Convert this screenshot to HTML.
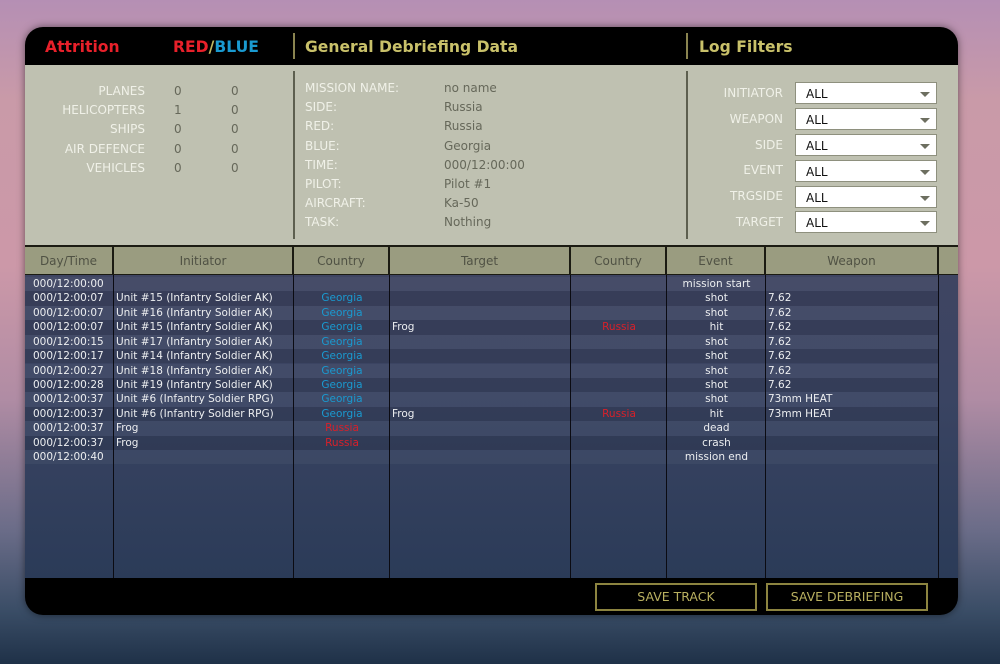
<!DOCTYPE html>
<html><head><meta charset="utf-8"><style>
*{margin:0;padding:0;box-sizing:border-box}
body{width:1000px;height:664px;overflow:hidden;position:relative;font-family:"DejaVu Sans","Liberation Sans",sans-serif;
background:linear-gradient(180deg,#b58fb4 0%,#c99aa8 15%,#cc98a8 40%,#b08ca4 60%,#6a6c88 80%,#3a4d66 92%,#1f3148 100%);}
.a{position:absolute;white-space:nowrap}
#panel{position:absolute;left:25px;top:27px;width:933px;height:588px;border-radius:18px;overflow:hidden;background:#000;box-shadow:0 0 8px rgba(0,0,0,.5)}
.h{font-weight:bold;font-size:15.6px;top:11px}
.gray{position:absolute;left:0;top:38px;width:933px;height:181px;background:#bfc1b1}
.lbl{color:#f0f1e8;font-size:12px}
.val{color:#66685a;font-size:12px}
.vl{position:absolute;width:2px;background:#5d5f4f}
.th{position:absolute;top:220px;height:28px;background:#9a9c80;border-right:2px solid #1b1b12;color:#505244;font-size:12px;text-align:center;line-height:28px}
.body{position:absolute;left:0;top:248px;width:933px;height:303px;background:linear-gradient(180deg,#3f4562 0%,#3a4462 40%,#2b3b58 100%)}
.col{position:absolute;top:248px;height:303px;width:1px;background:#0b0b12}
.row{position:absolute;left:0;width:913px;height:14.4px}
.c{position:absolute;font-size:10.5px;color:#eceef0;line-height:14px}
.sel{position:absolute;left:770px;width:142px;height:22px;background:#fff;border:1px solid #8e907e;font-size:12px;color:#111;padding-left:10px;line-height:23px}
.sel:after{content:"";position:absolute;right:6px;top:9px;border-left:5px solid transparent;border-right:5px solid transparent;border-top:5px solid #6d6f60}
.btn{position:absolute;top:556px;height:28px;border:2px solid #8c8440;color:#b9b060;font-size:12.5px;text-align:center;line-height:24px}
</style></head><body>
<div id="panel">
<div class="a h" style="left:20px;color:#e8202a">Attrition</div>
<div class="a h" style="left:148px"><span style="color:#e8202a">RED</span><span style="color:#c0b862">/</span><span style="color:#1a9ad0">BLUE</span></div>
<div class="vl" style="left:268px;top:6px;height:26px;background:#8a8450"></div>
<div class="a h" style="left:280px;color:#c9c16a">General Debriefing Data</div>
<div class="vl" style="left:661px;top:6px;height:26px;background:#8a8450"></div>
<div class="a h" style="left:674px;color:#c9c16a">Log Filters</div>
<div class="gray"></div>
<div class="vl" style="left:268px;top:44px;height:168px"></div>
<div class="vl" style="left:661px;top:44px;height:168px"></div>

<div class="a lbl" style="right:813px;top:55px;text-align:right;line-height:19.2px">PLANES<br>HELICOPTERS<br>SHIPS<br>AIR DEFENCE<br>VEHICLES</div>
<div class="a val" style="left:149px;top:55px;line-height:19.2px">0<br>1<br>0<br>0<br>0</div>
<div class="a val" style="left:206px;top:55px;line-height:19.2px">0<br>0<br>0<br>0<br>0</div>

<div class="a lbl" style="left:280px;top:52px;line-height:19.2px">MISSION NAME:<br>SIDE:<br>RED:<br>BLUE:<br>TIME:<br>PILOT:<br>AIRCRAFT:<br>TASK:</div>
<div class="a val" style="left:419px;top:52px;line-height:19.2px">no name<br>Russia<br>Russia<br>Georgia<br>000/12:00:00<br>Pilot #1<br>Ka-50<br>Nothing</div>

<div class="a lbl" style="right:175px;top:54px;text-align:right;line-height:25.8px">INITIATOR<br>WEAPON<br>SIDE<br>EVENT<br>TRGSIDE<br>TARGET</div>
<div class="sel" style="top:55px">ALL</div>
<div class="sel" style="top:81px">ALL</div>
<div class="sel" style="top:107px">ALL</div>
<div class="sel" style="top:133px">ALL</div>
<div class="sel" style="top:159px">ALL</div>
<div class="sel" style="top:184px">ALL</div>

<div class="th" style="left:0;width:89px">Day/Time</div>
<div class="th" style="left:89px;width:180px">Initiator</div>
<div class="th" style="left:269px;width:96px">Country</div>
<div class="th" style="left:365px;width:181px">Target</div>
<div class="th" style="left:546px;width:96px">Country</div>
<div class="th" style="left:642px;width:99px">Event</div>
<div class="th" style="left:741px;width:173px">Weapon</div>
<div class="th" style="left:914px;width:19px;border-right:0"></div>
<div style="position:absolute;left:0;top:218px;width:933px;height:2px;background:#1b1b12"></div>
<div style="position:absolute;left:0;top:247px;width:933px;height:2px;background:#1b1b12"></div>
<div class="body"></div>
<div id="rows"></div>
<div class="col" style="left:88px"></div>
<div class="col" style="left:268px"></div>
<div class="col" style="left:364px"></div>
<div class="col" style="left:545px"></div>
<div class="col" style="left:641px"></div>
<div class="col" style="left:740px"></div>
<div class="col" style="left:913px"></div>

<div class="btn" style="left:570px;width:162px">SAVE TRACK</div>
<div class="btn" style="left:741px;width:162px">SAVE DEBRIEFING</div>
</div>
<script>
var d=[
["000/12:00:00","","","","","mission start",""],
["000/12:00:07","Unit #15 (Infantry Soldier AK)","Georgia","","","shot","7.62"],
["000/12:00:07","Unit #16 (Infantry Soldier AK)","Georgia","","","shot","7.62"],
["000/12:00:07","Unit #15 (Infantry Soldier AK)","Georgia","Frog","Russia","hit","7.62"],
["000/12:00:15","Unit #17 (Infantry Soldier AK)","Georgia","","","shot","7.62"],
["000/12:00:17","Unit #14 (Infantry Soldier AK)","Georgia","","","shot","7.62"],
["000/12:00:27","Unit #18 (Infantry Soldier AK)","Georgia","","","shot","7.62"],
["000/12:00:28","Unit #19 (Infantry Soldier AK)","Georgia","","","shot","7.62"],
["000/12:00:37","Unit #6 (Infantry Soldier RPG)","Georgia","","","shot","73mm HEAT"],
["000/12:00:37","Unit #6 (Infantry Soldier RPG)","Georgia","Frog","Russia","hit","73mm HEAT"],
["000/12:00:37","Frog","Russia","","","dead",""],
["000/12:00:37","Frog","Russia","","","crash",""],
["000/12:00:40","","","","","mission end",""]];
var h="";
d.forEach(function(r,i){
var t=250+i*14.42;
h+='<div class="row" style="top:'+t+'px;background:'+(i%2?'rgba(0,0,0,.1)':'rgba(255,255,255,.04)')+'"></div>';
var cc=function(s){return s=="Georgia"?"#1a9ad0":"#d8202a"};
h+='<div class="c" style="left:8px;top:'+t+'px">'+r[0]+'</div>';
h+='<div class="c" style="left:91px;top:'+t+'px">'+r[1]+'</div>';
if(r[2])h+='<div class="c" style="left:269px;width:96px;text-align:center;color:'+cc(r[2])+';top:'+t+'px">'+r[2]+'</div>';
h+='<div class="c" style="left:367px;top:'+t+'px">'+r[3]+'</div>';
if(r[4])h+='<div class="c" style="left:546px;width:96px;text-align:center;color:'+cc(r[4])+';top:'+t+'px">'+r[4]+'</div>';
h+='<div class="c" style="left:642px;width:99px;text-align:center;top:'+t+'px">'+r[5]+'</div>';
h+='<div class="c" style="left:743px;top:'+t+'px">'+r[6]+'</div>';
});
document.getElementById("rows").innerHTML=h;
</script>
</body></html>
